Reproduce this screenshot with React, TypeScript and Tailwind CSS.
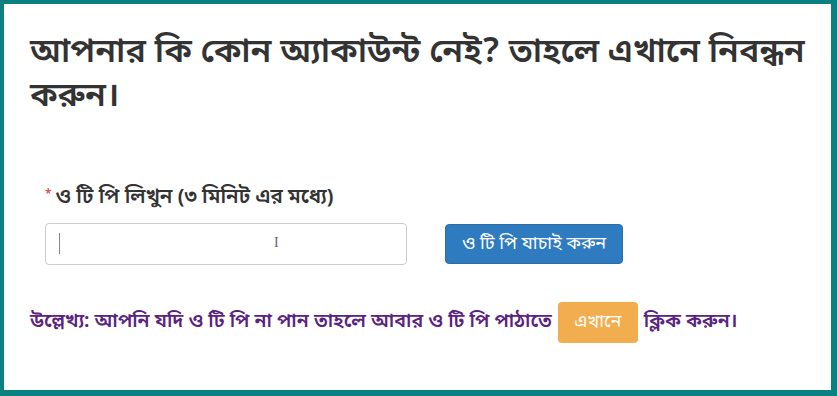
export default function App() {
  return (
    <div
      className="w-[837px] h-[396px] bg-[#0b8080] pt-[4px] pl-[4px] pr-[6px] pb-[6px]"
      style={{ fontFamily: '"Noto Sans Bengali", "Noto Sans", "Liberation Sans", sans-serif' }}
    >
      <div className="h-full bg-white pl-[26px] pt-[28px]">
        <h1 className="text-[34px] leading-[44px] font-semibold text-[#333]">
          আপনার কি কোন অ্যাকাউন্ট নেই? তাহলে এখানে নিবন্ধন করুন।
        </h1>
        <div className="mt-[65px] pl-[15px]">
          <label className="flex items-start gap-[4px] text-[20.5px] leading-[26px] font-semibold text-[#333]">
            <span className="text-[#d9534f] text-[12px] leading-none mt-[4px]">*</span>
            ও টি পি লিখুন (৩ মিনিট এর মধ্যে)
          </label>
          <div className="flex items-center mt-[12px]">
            <div className="relative">
              <input
                type="text"
                className="block w-[362px] h-[42px] border border-[#ccc] rounded-[4px] px-3 outline-none"
              />
              <span className="absolute left-[14px] top-[10px] w-[1px] h-[21px] bg-[#888]" />
              <span
                className="absolute left-[229px] top-[11px] text-[14px] leading-[18px] text-[#666]"
                style={{ fontFamily: '"Liberation Serif", serif' }}
              >
                I
              </span>
            </div>
            <button
              type="button"
              className="ml-[38px] w-[178px] h-[40px] rounded-[4px] bg-[#2f7bc0] border border-[#2e6da4] text-white text-[18px]"
            >
              ও টি পি যাচাই করুন
            </button>
          </div>
        </div>
        <p className="mt-[37px] flex items-center gap-[5px] text-[19.6px] font-semibold text-[#5a2381]">
          উল্লেখ্য: আপনি যদি ও টি পি না পান তাহলে আবার ও টি পি পাঠাতে
          <button
            type="button"
            className="w-[80px] h-[41px] rounded-[4px] bg-[#f2ad4e] text-white font-normal text-[18px] mx-[1px]"
          >
            এখানে
          </button>
          ক্লিক করুন।
        </p>
      </div>
    </div>
  );
}
